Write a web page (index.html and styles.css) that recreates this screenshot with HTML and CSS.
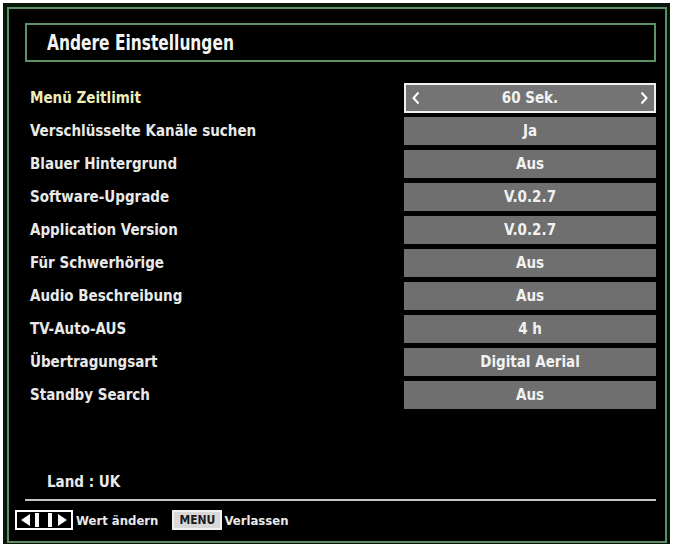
FILE: index.html
```html
<!DOCTYPE html>
<html lang="de">
<head>
<meta charset="utf-8">
<title>Andere Einstellungen</title>
<link rel="stylesheet" href="styles.css">
</head>
<body>
<div class="tv">
  <div class="frame">
    <div class="title-box"><span class="title">Andere Einstellungen</span></div>
    <div class="list">
      <div class="row selected">
        <span class="label">Menü Zeitlimit</span>
        <span class="value">
          <svg class="chev" width="8" height="14" viewBox="0 0 8 14"><polyline points="6.5,1.5 1.5,7 6.5,12.5" fill="none" stroke="#fff" stroke-width="2"/></svg>
          <span class="vtext">60 Sek.</span>
          <svg class="chev" width="8" height="14" viewBox="0 0 8 14"><polyline points="1.5,1.5 6.5,7 1.5,12.5" fill="none" stroke="#fff" stroke-width="2"/></svg>
        </span>
      </div>
      <div class="row"><span class="label">Verschlüsselte Kanäle suchen</span><span class="value">Ja</span></div>
      <div class="row"><span class="label">Blauer Hintergrund</span><span class="value">Aus</span></div>
      <div class="row"><span class="label">Software-Upgrade</span><span class="value">V.0.2.7</span></div>
      <div class="row"><span class="label">Application Version</span><span class="value">V.0.2.7</span></div>
      <div class="row"><span class="label">Für Schwerhörige</span><span class="value">Aus</span></div>
      <div class="row"><span class="label">Audio Beschreibung</span><span class="value">Aus</span></div>
      <div class="row"><span class="label">TV-Auto-AUS</span><span class="value">4 h</span></div>
      <div class="row"><span class="label">Übertragungsart</span><span class="value">Digital Aerial</span></div>
      <div class="row"><span class="label">Standby Search</span><span class="value">Aus</span></div>
    </div>
    <div class="land">Land : UK</div>
    <div class="rule"></div>
    <div class="footer">
      <svg class="key-arrows" width="58" height="20" viewBox="0 0 58 20">
        <rect x="1" y="1" width="56" height="18" fill="none" stroke="#fff" stroke-width="2"/>
        <polygon points="15,4 15,16 6,10" fill="#fff"/>
        <rect x="20" y="3" width="4" height="14" fill="#fff"/>
        <rect x="33" y="3" width="4" height="14" fill="#fff"/>
        <polygon points="43,4 43,16 52,10" fill="#fff"/>
      </svg>
      <span class="hint">Wert ändern</span>
      <span class="key-menu">MENU</span>
      <span class="hint">Verlassen</span>
    </div>
  </div>
</div>
</body>
</html>
```
FILE: styles.css
```css
html, body {
  margin: 0;
  padding: 0;
  background: #ffffff;
}
.tv {
  margin: 3px 0 0 3px;
  width: 667px;
  height: 541px;
  box-sizing: border-box;
  padding: 4px 3px 1px 4px;
  background: #08150b;
}
.frame {
  box-sizing: border-box;
  height: 100%;
  border: 2px solid #5e8d66;
  background: #000;
  padding: 14px 9px 0 16px;
  display: flex;
  flex-direction: column;
  font-family: "DejaVu Sans Condensed", "DejaVu Sans", sans-serif;
  font-weight: bold;
  color: #ececec;
}
.title-box {
  height: 39px;
  box-sizing: border-box;
  border: 2px solid #5f9068;
  display: flex;
  align-items: center;
  padding-left: 20px;
}
.title {
  display: inline-block;
  font-family: "DejaVu Sans Condensed", "DejaVu Sans", sans-serif;
  font-weight: bold;
  font-size: 22px;
  color: #f4f4f4;
  transform: scaleX(0.78);
  transform-origin: left center;
}
.list {
  margin-top: 19px;
  display: flex;
  flex-direction: column;
}
.row {
  height: 33px;
  display: grid;
  grid-template-columns: 1fr 252px;
  align-items: center;
}
.label {
  padding-left: 5px;
  font-size: 15px;
  color: #e9e9e9;
}
.row.selected .label {
  color: #eeeebb;
}
.value {
  height: 28px;
  box-sizing: border-box;
  background: #6f6f6f;
  display: flex;
  align-items: center;
  justify-content: center;
  font-size: 15px;
  color: #f2f2f2;
}
.row.selected .value {
  height: 30px;
  border: 2px solid #f0f0f0;
  background: #747474;
  justify-content: space-between;
  padding: 0 6px;
}
.land {
  margin-top: 62px;
  padding-left: 22px;
  font-size: 15px;
  color: #e9e9e9;
}
.rule {
  margin-top: 8px;
  height: 2px;
  background: #c4c4c4;
}
.footer {
  margin-top: 9px;
  margin-left: -10px;
  display: flex;
  align-items: center;
  font-size: 13px;
  color: #e9e9e9;
}
.key-arrows {
  display: block;
  margin-right: 3px;
}
.hint {
  margin-right: 14px;
}
.key-menu {
  border: 2px solid #f0f0f0;
  background: #d8d8d8;
  color: #1a1a1a;
  font-size: 12px;
  padding: 1px 5px;
  margin-right: 2px;
  line-height: 14px;
}
```
